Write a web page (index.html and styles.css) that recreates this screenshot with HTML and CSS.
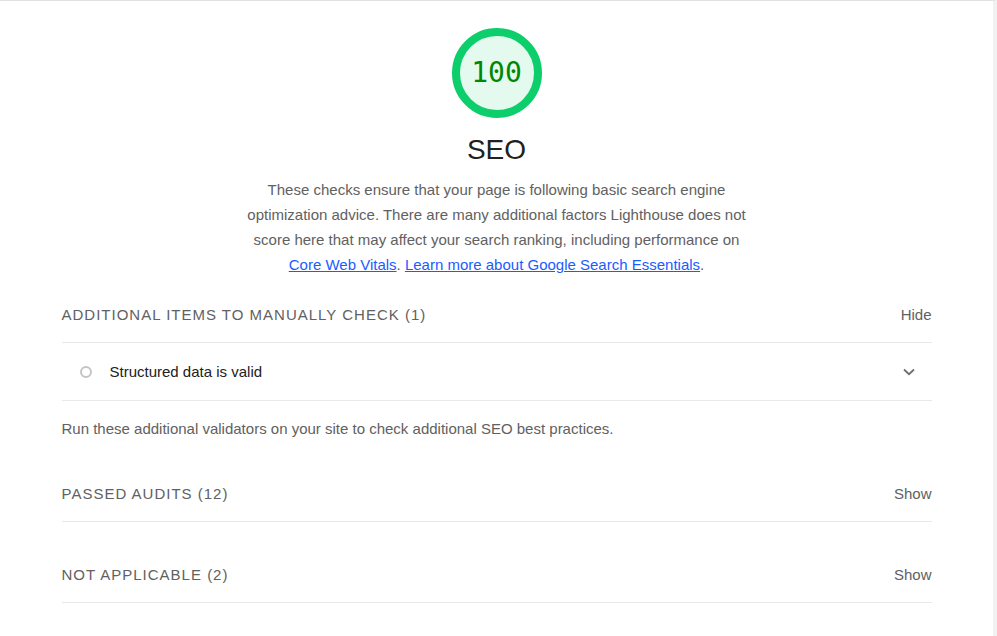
FILE: index.html
```html
<!DOCTYPE html>
<html>
<head>
<meta charset="utf-8">
<link rel="stylesheet" href="styles.css">
</head>
<body>
<div class="page">
  <div class="content">
    <div class="gauge">
      <svg class="gauge-svg" width="96" height="96" viewBox="0 0 96 96">
        <circle cx="48" cy="48" r="41" fill="#e5faef" stroke="#0cce6b" stroke-width="8"/>
      </svg>
      <span class="gauge-score">100</span>
    </div>
    <h1 class="title">SEO</h1>
    <p class="desc">These checks ensure that your page is following basic search engine optimization advice. There are many additional factors Lighthouse does not score here that may affect your search ranking, including performance on <a href="#">Core Web Vitals</a>. <a href="#">Learn more about Google Search Essentials</a>.</p>

    <div class="group">
      <div class="group-head">
        <span class="group-title">Additional items to manually check <span class="count">(1)</span></span>
        <span class="toggle">Hide</span>
      </div>
      <div class="audit">
        <span class="audit-icon"></span>
        <span class="audit-title">Structured data is valid</span>
        <svg class="chev" width="12" height="8" viewBox="0 0 12 8"><path d="M1 1.5 L6 6.2 L11 1.5" fill="none" stroke="#6e6e6e" stroke-width="1.8"/></svg>
      </div>
      <p class="group-desc">Run these additional validators on your site to check additional SEO best practices.</p>
    </div>

    <div class="group group-passed">
      <div class="group-head">
        <span class="group-title">Passed audits <span class="count">(12)</span></span>
        <span class="toggle">Show</span>
      </div>
    </div>

    <div class="group group-na">
      <div class="group-head">
        <span class="group-title">Not applicable <span class="count">(2)</span></span>
        <span class="toggle">Show</span>
      </div>
    </div>
  </div>
</div>
</body>
</html>
```

FILE: styles.css
```css
html, body {
  margin: 0;
  padding: 0;
  background: #fff;
}
body {
  font-family: "Liberation Sans", Arial, sans-serif;
  font-size: 15px;
  color: #212121;
}
.page {
  height: 636px;
  box-sizing: border-box;
  border-top: 1px solid #e0e0e0;
  border-right: 4px solid #f1f1f1;
  overflow: hidden;
}
.content {
  width: 870px;
  margin: 0 auto;
}
.gauge {
  position: relative;
  width: 96px;
  height: 96px;
  margin: 24px auto 0;
}
.gauge-svg {
  display: block;
}
.gauge-score {
  position: absolute;
  left: 0;
  right: 0;
  top: 0;
  line-height: 96px;
  text-align: center;
  font-family: "DejaVu Sans Mono", "Liberation Mono", monospace;
  font-size: 28px;
  color: #008800;
}
.title {
  margin: 12px 0 0;
  text-align: center;
  font-weight: normal;
  font-size: 28px;
  line-height: 34px;
  color: #212121;
}
.desc {
  width: 510px;
  margin: 10px auto 0;
  text-align: center;
  line-height: 25px;
  color: #616161;
}
.desc a {
  color: #1a5cff;
}
.group-head {
  display: flex;
  justify-content: space-between;
  align-items: center;
  height: 56px;
  border-bottom: 1px solid #e8e8e8;
  box-sizing: border-box;
}
.group {
  margin-top: 10px;
}
.group-title {
  text-transform: uppercase;
  letter-spacing: 1px;
  color: #616161;
}
.toggle {
  color: #616161;
}
.audit {
  display: flex;
  align-items: center;
  height: 58px;
  border-bottom: 1px solid #e8e8e8;
  box-sizing: border-box;
  padding-left: 18px;
  padding-right: 17px;
}
.audit-icon {
  width: 8px;
  height: 8px;
  border: 2px solid #c4c4c4;
  border-radius: 50%;
  margin-right: 18px;
}
.audit-title {
  flex: 1;
  color: #212121;
}
.chev {
  display: block;
}
.group-desc {
  margin: 16px 0 0;
  line-height: 24px;
  color: #616161;
}
.group-passed {
  margin-top: 25px;
}
.group-na {
  margin-top: 25px;
}
```
